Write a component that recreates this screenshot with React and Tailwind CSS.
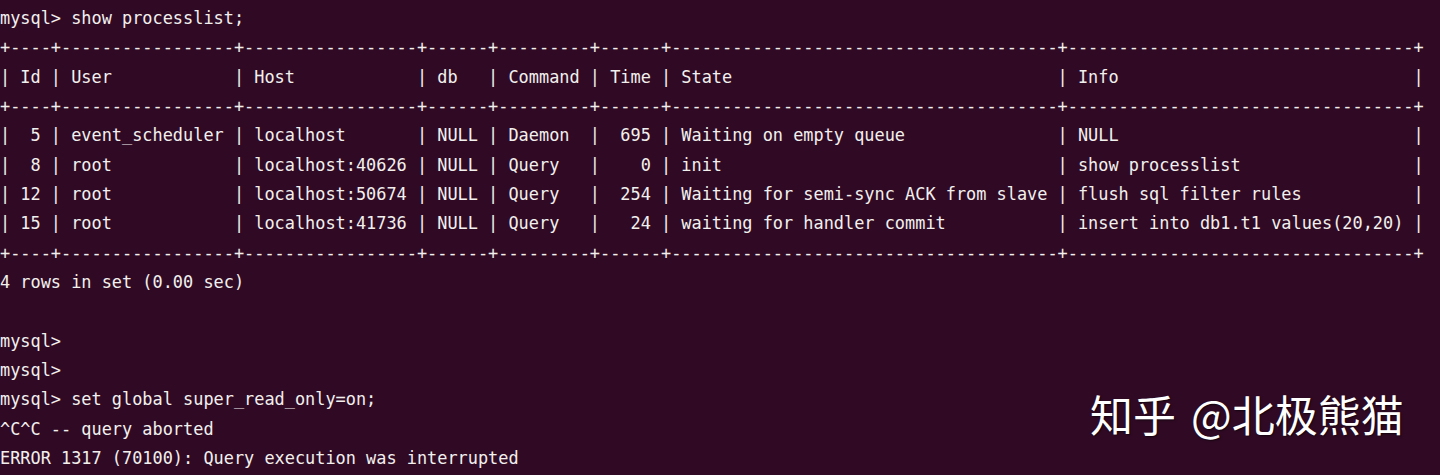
const cols = [
  { name: 'Id', w: 2, right: true },
  { name: 'User', w: 15 },
  { name: 'Host', w: 15 },
  { name: 'db', w: 4 },
  { name: 'Command', w: 7 },
  { name: 'Time', w: 4, right: true },
  { name: 'State', w: 36 },
  { name: 'Info', w: 32 },
];

const rows = [
  ['5', 'event_scheduler', 'localhost', 'NULL', 'Daemon', '695', 'Waiting on empty queue', 'NULL'],
  ['8', 'root', 'localhost:40626', 'NULL', 'Query', '0', 'init', 'show processlist'],
  ['12', 'root', 'localhost:50674', 'NULL', 'Query', '254', 'Waiting for semi-sync ACK from slave', 'flush sql filter rules'],
  ['15', 'root', 'localhost:41736', 'NULL', 'Query', '24', 'waiting for handler commit', 'insert into db1.t1 values(20,20)'],
];

const border = '+' + cols.map((c) => '-'.repeat(c.w + 2)).join('+') + '+';

function row(cells, header) {
  return (
    '|' +
    cols
      .map((c, i) => {
        const v = cells[i];
        const padded = c.right && !header ? v.padStart(c.w) : v.padEnd(c.w);
        return ' ' + padded + ' ';
      })
      .join('|') +
    '|'
  );
}

const lines = [
  'mysql> show processlist;',
  border,
  row(cols.map((c) => c.name), true),
  border,
  ...rows.map((r) => row(r, false)),
  border,
  '4 rows in set (0.00 sec)',
  '',
  'mysql> ',
  'mysql> ',
  'mysql> set global super_read_only=on;',
  '^C^C -- query aborted',
  'ERROR 1317 (70100): Query execution was interrupted',
];

export default function App() {
  return (
    <div className="relative w-[1440px] h-[475px] overflow-hidden bg-[#300a24] text-[#f2f0ee]">
      <div className="pt-[4px] font-['DejaVu_Sans_Mono',monospace] text-[16.9px] leading-[29.35px] whitespace-pre">
        {lines.map((l, i) => (
          <div key={i} className="h-[29.35px]">
            {l}
          </div>
        ))}
      </div>

      {/* 水印 */}
      <div className="absolute left-[1090px] top-[386px] flex gap-[15px] font-['Noto_Sans_CJK_SC',sans-serif] text-[43px] leading-[54px] text-white [text-shadow:1px_1px_2px_rgba(0,0,0,0.6)] whitespace-pre">
        <span>知乎</span>
        <span>@北极熊猫</span>
      </div>
    </div>
  );
}
